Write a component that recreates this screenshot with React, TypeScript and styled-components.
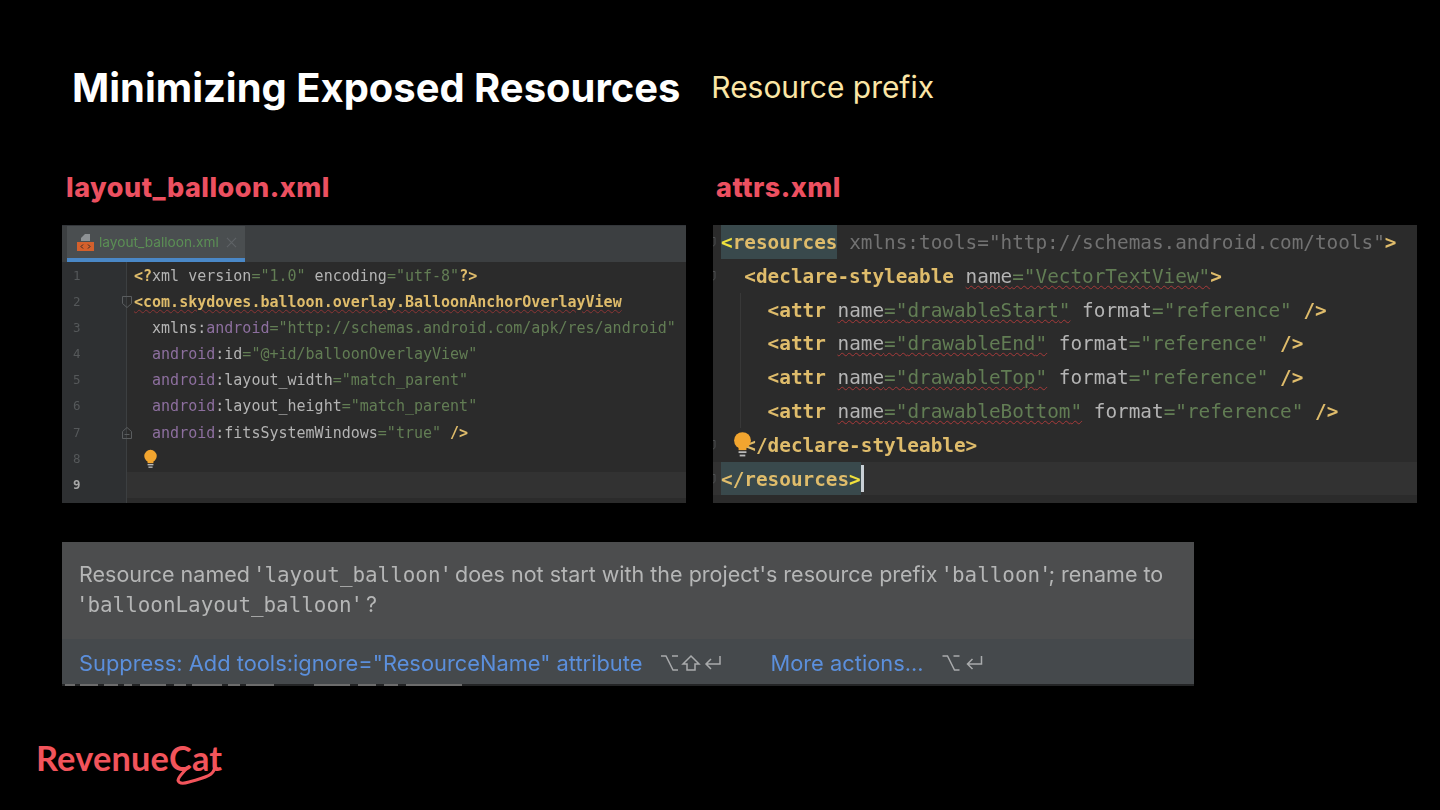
import React from "react";
import styled, { createGlobalStyle } from "styled-components";

const Global = createGlobalStyle`
  html, body { margin: 0; padding: 0; background: #000; }
  #root { width: 1440px; height: 810px; overflow: hidden; }
`;

const Slide = styled.div`
  width: 1440px;
  height: 810px;
  background: #000;
  box-sizing: border-box;
  padding: 0 23px 0 62px;
  display: flex;
  flex-direction: column;
  font-family: Inter, "Liberation Sans", sans-serif;
`;

const Header = styled.header`
  height: 176px;
  box-sizing: border-box;
  padding: 64px 0 0 10px;
  display: flex;
  align-items: flex-start;
  gap: 31px;
`;

const Title = styled.h1`
  margin: 0;
  font-size: 39.95px;
  line-height: 48px;
  font-weight: 700;
  color: #fff;
  white-space: nowrap;
`;

const Subtitle = styled.span`
  font-size: 29.95px;
  line-height: 46px;
  font-weight: 400;
  color: #fbe6a6;
  white-space: nowrap;
`;

const Columns = styled.div`
  display: grid;
  grid-template-columns: 624px 704px;
  column-gap: 27px;
`;

const Column = styled.section`
  display: flex;
  flex-direction: column;
`;

const FileLabel = styled.h2<{ $inset: number }>`
  margin: 0 0 0 ${(p) => p.$inset}px;
  height: 49px;
  font-family: Inter, "DejaVu Sans", sans-serif;
  font-size: 27px;
  line-height: 24px;
  letter-spacing: 0.5px;
  font-weight: 800;
  color: #ec5060;
  white-space: nowrap;
`;

const LeftPanel = styled.div`
  height: 278px;
  background: #2b2b2b;
  display: flex;
  flex-direction: column;
  overflow: hidden;
`;

const TabBar = styled.div`
  height: 37px;
  flex: none;
  box-sizing: border-box;
  background: #3c3f41;
  border-top: 1px solid #33363a;
  padding-left: 5px;
  display: flex;
`;

const Tab = styled.div`
  width: 178px;
  box-sizing: border-box;
  background: #4a4e50;
  border-bottom: 4px solid #4a88c7;
  display: flex;
  align-items: center;
  padding-left: 9px;
  gap: 4px;
`;

const TabIcon = styled.svg`
  flex: none;
`;

const TabName = styled.span`
  font-size: 13.7px;
  color: #5b8f55;
  filter: blur(0.3px);
`;

const TabClose = styled.svg`
  flex: none;
  margin-left: 3px;
`;

const EditorBody = styled.div`
  flex: 1;
  display: flex;
  min-height: 0;
`;

const Gutter = styled.div`
  width: 65px;
  flex: none;
  box-sizing: border-box;
  background: #2e3032;
  border-right: 1px solid #3c3f41;
  padding: 1px 0 0 11px;
`;

const GutterRow = styled.div<{ $active?: boolean }>`
  height: 26.1px;
  line-height: 26.1px;
  font-family: "DejaVu Sans Mono", monospace;
  font-size: 12.5px;
  font-weight: ${(p) => (p.$active ? 700 : 400)};
  color: ${(p) => (p.$active ? "#a8a8a8" : "#55585a")};
  position: relative;
  filter: blur(0.3px);
`;

const FoldMark = styled.svg`
  position: absolute;
  right: -7px;
  top: 6px;
`;

const Tag = styled.span`
  color: #dfbc6b;
`;
const Attr = styled.span`
  color: #b4b4b4;
`;
const Ns = styled.span`
  color: #8d6f9f;
`;
const Str = styled.span`
  color: #627d54;
`;
const Dim = styled.span`
  color: #727272;
`;
const Squiggle = styled.span`
  text-decoration: underline wavy #a83a3a;
  text-decoration-thickness: 1px;
  text-underline-offset: 2px;
`;
const Match = styled.span`
  background: #39494c;
  color: #dfbc6b;
  display: inline-block;
  height: 33.8px;
`;
const Bright = styled.span`
  color: #f0e23c;
`;

const LeftCode = styled.div`
  flex: 1;
  min-width: 0;
  padding-top: 1px;
  font-family: "DejaVu Sans Mono", monospace;
  font-size: 15px;
  filter: blur(0.35px);

  ${Tag} {
    font-weight: 700;
  }
  ${Squiggle} {
    text-decoration-color: #8c3535;
  }
`;

const LeftLine = styled.div<{ $indent?: number; $active?: boolean }>`
  height: 26.1px;
  line-height: 26.1px;
  box-sizing: border-box;
  padding-left: ${(p) => 7 + (p.$indent ?? 0) * 9.03}px;
  white-space: pre;
  background: ${(p) => (p.$active ? "#323232" : "transparent")};
  color: #bababa;
  position: relative;
`;

const BulbIcon = styled.svg<{ $left: number; $top: number }>`
  position: absolute;
  left: ${(p) => p.$left}px;
  top: ${(p) => p.$top}px;
`;

const RightPanel = styled.div`
  height: 278px;
  background: #2b2b2b;
  font-family: "DejaVu Sans Mono", monospace;
  font-size: 19.35px;
  font-weight: 700;
  overflow: hidden;
  filter: blur(0.45px);
`;

const RightLine = styled.div<{ $indent?: number; $active?: boolean }>`
  height: 33.8px;
  line-height: 35px;
  box-sizing: border-box;
  padding-left: ${(p) => 8 + (p.$indent ?? 0) * 11.65}px;
  white-space: pre;
  background: ${(p) => (p.$active ? "#323232" : "transparent")};
  color: #b4b4b4;
  position: relative;
`;

const GutterStub = styled.svg`
  position: absolute;
  left: -4px;
  top: 11px;
`;

const IndentGuide = styled.i`
  position: absolute;
  left: 27px;
  top: 0;
  bottom: 0;
  width: 1px;
  background: #383838;
`;

const Caret = styled.span`
  display: inline-block;
  width: 3px;
  height: 27px;
  vertical-align: -6px;
  background: #c9d0d6;
`;

const Regular = styled.span`
  font-weight: 500;
`;

const Notice = styled.div`
  margin-top: 39px;
  width: 1132px;
  height: 144px;
  display: flex;
  flex-direction: column;
  background: #4c4d4e;
  overflow: hidden;
  filter: blur(0.35px);
`;

const Message = styled.p`
  margin: 0;
  height: 97px;
  flex: none;
  box-sizing: border-box;
  padding: 18px 0 0 17px;
  font-size: 21.5px;
  line-height: 29px;
  color: #b5b6b6;
  white-space: nowrap;
`;

const Mono = styled.span`
  font-family: "DejaVu Sans Mono", monospace;
  font-size: 20.9px;
  padding: 0 2px;
`;

const Actions = styled.div`
  height: 45px;
  flex: none;
  box-sizing: border-box;
  background: #45494c;
  padding: 3px 0 0 17px;
  display: flex;
  align-items: center;
`;

const ActionLink = styled.span`
  font-size: 21.85px;
  color: #5b8fdc;
  white-space: nowrap;
`;

const Keys = styled.svg<{ $gap: number }>`
  margin: 0 ${(p) => p.$gap}px 0 17px;
  flex: none;
`;

const CutOff = styled.svg`
  display: block;
  flex: none;
  background: #232425;
`;

const Footer = styled.footer`
  margin: 54px 0 0 -26px;
  height: 46px;
  position: relative;
  width: 190px;
`;

const Wordmark = styled.span`
  font-family: Lato, "Open Sans", sans-serif;
  font-size: 34.3px;
  line-height: 36px;
  font-weight: 700;
  letter-spacing: 0.2px;
  color: #f2545b;
  white-space: nowrap;
`;

const Tail = styled.svg`
  position: absolute;
  left: 134px;
  top: 9px;
`;

const BulbArt = () => (
  <>
    <circle cx="10" cy="8.500" r="7.500" fill="#f2a52f" />
    <rect x="6.500" y="13" width="7" height="4" fill="#f2a52f" />
    <rect x="6.500" y="18" width="7" height="1.600" fill="#b9b9b9" />
    <rect x="7.500" y="21" width="5" height="1.600" fill="#b9b9b9" />
  </>
);

const Stub = () => (
  <GutterStub width="8" height="12" viewBox="0 0 8 12">
    <path d="M0 1.500h6v7L3 11H0" fill="none" stroke="#4d4f50" />
  </GutterStub>
);

const leftLines = [
  <><Attr>xmlns:</Attr><Ns>android</Ns><Str>="http://schemas.android.com/apk/res/android"</Str></>,
  <><Ns>android</Ns><Attr>:id</Attr><Str>="@+id/balloonOverlayView"</Str></>,
  <><Ns>android</Ns><Attr>:layout_width</Attr><Str>="match_parent"</Str></>,
  <><Ns>android</Ns><Attr>:layout_height</Attr><Str>="match_parent"</Str></>,
  <><Ns>android</Ns><Attr>:fitsSystemWindows</Attr><Str>="true"</Str> <Tag>/&gt;</Tag></>,
];

const attrs = ["drawableStart", "drawableEnd", "drawableTop", "drawableBottom"];

export default function App() {
  return (
    <Slide>
      <Global />
      <Header>
        <Title>Minimizing Exposed Resources</Title>
        <Subtitle>Resource prefix</Subtitle>
      </Header>
      <Columns>
        <Column>
          <FileLabel $inset={4}>layout_balloon.xml</FileLabel>
          <LeftPanel>
            <TabBar>
              <Tab>
                <TabIcon width="19" height="21" viewBox="0 0 19 21">
                  <path d="M9 2h5v7H5V6z" fill="#8d9194" />
                  <rect x="1" y="10" width="17" height="9" fill="#d4602c" />
                  <path d="M7 12.500 5 14.500l2 2M12 12.500l2 2-2 2" stroke="#2b2b2b" strokeWidth="1" fill="none" />
                </TabIcon>
                <TabName>layout_balloon.xml</TabName>
                <TabClose width="11" height="11" viewBox="0 0 12 12">
                  <path d="M1 1l10 10M11 1 1 11" stroke="#5f6366" strokeWidth="1.200" />
                </TabClose>
              </Tab>
            </TabBar>
            <EditorBody>
              <Gutter>
                {[1, 2, 3, 4, 5, 6, 7, 8, 9].map((n) => (
                  <GutterRow key={n} $active={n === 9}>
                    {n}
                    {n === 2 && (
                      <FoldMark width="12" height="14" viewBox="0 0 12 14">
                        <path d="M1.500 1.500h9v7l-4.500 4-4.500-4z" fill="none" stroke="#5a5d5f" />
                      </FoldMark>
                    )}
                    {n === 7 && (
                      <FoldMark width="12" height="14" viewBox="0 0 12 14">
                        <path d="M1.500 12.500h9v-7l-4.500-4-4.500 4z" fill="none" stroke="#5a5d5f" />
                        <path d="M3.500 8.500h5" stroke="#5a5d5f" />
                      </FoldMark>
                    )}
                  </GutterRow>
                ))}
              </Gutter>
              <LeftCode>
                <LeftLine>
                  <Tag>&lt;?</Tag><Attr>xml version</Attr><Str>="1.0"</Str><Attr> encoding</Attr><Str>="utf-8"</Str><Tag>?&gt;</Tag>
                </LeftLine>
                <LeftLine>
                  <Tag><Squiggle>&lt;com.skydoves.balloon.overlay.BalloonAnchorOverlayView</Squiggle></Tag>
                </LeftLine>
                {leftLines.map((l, i) => (
                  <LeftLine key={i} $indent={2}>{l}</LeftLine>
                ))}
                <LeftLine>
                  <BulbIcon $left={15} $top={3} width="17" height="20" viewBox="0 0 20 24"><BulbArt /></BulbIcon>
                </LeftLine>
                <LeftLine $active />
              </LeftCode>
            </EditorBody>
          </LeftPanel>
        </Column>
        <Column>
          <FileLabel $inset={3}>attrs.xml</FileLabel>
          <RightPanel>
            <RightLine>
              <Stub />
              <Match><Bright>&lt;</Bright>resources</Match>
              <Dim><Regular> xmlns:tools="http://schemas.android.com/tools"</Regular></Dim><Tag>&gt;</Tag>
            </RightLine>
            <RightLine $indent={2}>
              <Stub />
              <Tag>&lt;declare-styleable</Tag> <Squiggle><Regular>name</Regular><Str><Regular>="VectorTextView"</Regular></Str></Squiggle><Tag>&gt;</Tag>
            </RightLine>
            {attrs.map((name) => (
              <RightLine key={name} $indent={4}>
                <IndentGuide />
                <Tag>&lt;attr</Tag> <Squiggle><Regular>name</Regular><Str><Regular>="{name}"</Regular></Str></Squiggle> <Regular>format</Regular><Str><Regular>="reference"</Regular></Str> <Tag>/&gt;</Tag>
              </RightLine>
            ))}
            <RightLine $indent={2}>
              <Stub />
              <BulbIcon $left={18} $top={3} width="23" height="27" viewBox="0 0 20 24"><BulbArt /></BulbIcon>
              <Tag>&lt;/declare-styleable&gt;</Tag>
            </RightLine>
            <RightLine $active>
              <Stub />
              <Match>&lt;/resources<Bright>&gt;</Bright></Match><Caret />
            </RightLine>
          </RightPanel>
        </Column>
      </Columns>
      <Notice>
        <Message>
          Resource named '<Mono>layout_balloon</Mono>' does not start with the project's resource prefix '<Mono>balloon</Mono>'; rename to
          <br />
          '<Mono>balloonLayout_balloon</Mono>' ?
        </Message>
        <Actions>
          <ActionLink>Suppress: Add tools:ignore="ResourceName" attribute</ActionLink>
          <Keys $gap={47} width="64" height="20" viewBox="0 0 62 20" fill="none" stroke="#a9abac" strokeWidth="1.500">
            <path d="M1 3h5l7 14h5M12 3h6" />
            <path d="M31 3l8 8h-4v6h-8v-6h-4z" />
            <path d="M60 3v8H46M51 6l-5 5 5 5" />
          </Keys>
          <ActionLink>More actions...</ActionLink>
          <Keys $gap={0} width="43" height="20" viewBox="0 0 42 20" fill="none" stroke="#a9abac" strokeWidth="1.500">
            <path d="M1 3h5l7 14h5M12 3h6" />
            <path d="M40 3v8H26M31 6l-5 5 5 5" />
          </Keys>
        </Actions>
        <CutOff width="1132" height="2" viewBox="0 0 1132 2">
          <path
            d="M3 1h10M18 1h18M42 1h14M62 1h8M78 1h26M112 1h12M130 1h30M166 1h12M184 1h28M252 1h36M296 1h18M322 1h14M344 1h56"
            stroke="#6c6c6c"
            strokeWidth="2"
          />
        </CutOff>
      </Notice>
      <Footer>
        <Wordmark>RevenueCat</Wordmark>
        <Tail width="60" height="40" viewBox="0 0 60 40" fill="none" stroke="#f2545b" strokeWidth="3" strokeLinecap="round">
          <path d="M16 20C12 25 8 28 8 31.500c1 3 6 3 11 1.500 8-2.500 17-4 22-8 3-2.500 4-5 4-9" />
        </Tail>
      </Footer>
    </Slide>
  );
}
